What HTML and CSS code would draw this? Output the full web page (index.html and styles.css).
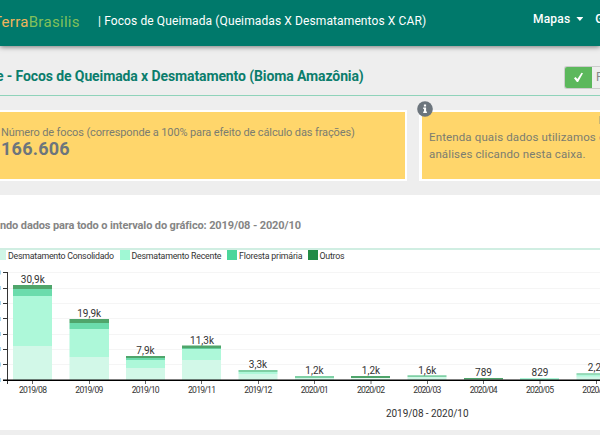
FILE: index.html
```html
<!DOCTYPE html>
<html lang="pt-BR">
<head>
<meta charset="utf-8">
<title>TerraBrasilis</title>
<link rel="stylesheet" href="styles.css">
</head>
<body>
<header class="navbar">
  <div class="brand"><span class="brand-terra">Terra</span><span class="brand-brasilis">Brasilis</span></div>
  <div class="app-name">| Focos de Queimada (Queimadas X Desmatamentos X CAR)</div>
  <nav class="menu"><span class="menu-item">Mapas</span><span class="caret"></span><span class="menu-item">G</span></nav>
</header>
<main>
  <div class="title-row">
    <h1>e - Focos de Queimada x Desmatamento (Bioma Amazônia)</h1>
    <div class="toggle">
      <span class="toggle-check"><svg width="11" height="11" viewBox="0 0 11 11"><path d="M1 6.2 2.6 5 4.4 7.1 8.5.8 10 1.3 5.1 10H3.9Z" fill="#fff"/></svg></span>
      <span class="toggle-label">P</span>
    </div>
  </div>
  <div class="cards">
    <section class="card card-count">
      <div class="count-label">Número de focos (corresponde a 100% para efeito de cálculo das frações)</div>
      <div class="count-value">166.606</div>
    </section>
    <section class="card card-info">
      <svg class="info-icon" width="16" height="16" viewBox="0 0 16 16"><circle cx="8" cy="8" r="7.8" fill="#6c757d"/><path d="M6.9 3.5h2.2v2.1H6.9zM6.2 6.6h2.9v4h.8v1.3H6.2v-1.3H7V7.9h-.8z" fill="#fff"/></svg>
      <p>Entenda quais dados utilizamos e<br>análises clicando nesta caixa.</p>
      <span class="card-edge"></span>
    </section>
  </div>
  <section class="panel">
    <h2>ndo dados para todo o intervalo do gráfico: 2019/08 - 2020/10</h2>
    <svg class="chart" width="600" height="182" viewBox="0 248 600 182">
      <path d="M0 249h600" stroke="#d0eee2" stroke-width="2"/>
      <g class="legend">
        <path d="M-4 250H6v10H-4z" fill="#d0f6e6"/>
        <path d="M120 250h10v10h-10z" fill="#a0f8d4"/>
        <path d="M227 250h10v10h-10z" fill="#4bd69c"/>
        <path d="M308 250h10v10h-10z" fill="#238b45"/>
        <text x="8" y="258.5" textLength="106">Desmatamento Consolidado</text>
        <text x="131.5" y="258.5" textLength="90">Desmatamento Recente</text>
        <text x="239" y="258.5" textLength="63.500">Floresta primária</text>
        <text x="319.500" y="258.5" textLength="25">Outros</text>
      </g>
      <path class="grid" d="M8 272.500h592M8 288.500h592M8 303.500h592M8 318.500h592M8 334.500h592M8 349.500h592M8 364.500h592"/>
      <g class="consolidado">
        <path d="M13 346h39v34H13zM69.500 357H109v23H69.500zM126 368h39v12h-39zM182 360h39v20h-39zM238.500 374h39v6h-39zM295 378h39v2h-39zM351 378.500h39v1.500h-39zM407.500 377h39v3h-39zM576.500 376H600v4h-23.500z"/>
      </g>
      <g class="recente">
        <path d="M13 296h39v50H13zM69.500 329H109v28H69.500zM126 360h39v8h-39zM182 349h39v11h-39zM238.500 372h39v2h-39zM520 378h39v2h-39zM576.500 374.500H600v2h-23.500z"/>
      </g>
      <g class="floresta">
        <path d="M13 289h39v7H13zM69.500 323H109v6H69.500zM126 358h39v2h-39zM182 348h39v1h-39z"/>
      </g>
      <g class="outros">
        <path d="M13 285h39v4H13zM69.500 319H109v4H69.500zM126 356h39v2h-39zM182 345.500h39v2.700h-39zM351 376h39v2h-39zM464 378h39v1.500h-39z"/>
      </g>
      <path fill="#7fd0a5" d="M238.500 370h39v2h-39zM295 376h39v2h-39zM407.500 375.300h39v1.700h-39zM576.500 373.200H600v1.500h-23.500z"/>
      <path class="axis" d="M7.500 272v112M3 272.500h5M3 288.500h5M3 303.500h5M3 318.500h5M3 334.500h5M3 349.500h5M3 364.500h5"/>
      <path d="M3 380.200h597" stroke="#000" stroke-width="1.400"/>
      <path class="ticks" d="M32.500 381v3M89.500 381v3M145.500 381v3M201.500 381v3M258.500 381v3M314.500 381v3M371 381v3M427.500 381v3M483.500 381v3M540 381v3M596.500 381v3"/>
      <path d="M0 270.500h1v4H0zM0 286h1v4H0zM0 301h1v4H0zM0 317h1v4H0zM0 332h1v4H0zM0 347h1v4H0zM0 362.500h1v4H0zM0 378h1v4H0z" fill="#a9d5ee"/>
      <g class="values">
        <text x="32.800" y="283">30,9k</text><text x="89.200" y="316.500">19,9k</text>
        <text x="145.500" y="354">7,9k</text><text x="202" y="343.500">11,3k</text>
        <text x="258" y="368">3,3k</text><text x="314.500" y="374">1,2k</text>
        <text x="371" y="374">1,2k</text><text x="427.300" y="373.500">1,6k</text>
        <text x="483.500" y="375.500">789</text><text x="540" y="375.500">829</text>
        <text x="597" y="371">2,2k</text>
      </g>
      <g class="months">
        <text x="19" y="392.500" textLength="28">2019/08</text><text x="75.300" y="392.500" textLength="28">2019/09</text>
        <text x="131.700" y="392.500" textLength="28">2019/10</text><text x="188" y="392.500" textLength="28">2019/11</text>
        <text x="244.300" y="392.500" textLength="28">2019/12</text><text x="300.700" y="392.500" textLength="28">2020/01</text>
        <text x="357" y="392.500" textLength="28">2020/02</text><text x="413.300" y="392.500" textLength="28">2020/03</text>
        <text x="469.700" y="392.500" textLength="28">2020/04</text><text x="526" y="392.500" textLength="28">2020/05</text>
        <text x="582.300" y="392.500" textLength="28">2020/06</text>
      </g>
      <text class="range" x="386" y="417" textLength="82.500">2019/08 - 2020/10</text>
    </svg>
  </section>
</main>
</body>
</html>
```
FILE: styles.css
```css
* { box-sizing: border-box; }
body {
  margin: 0;
  width: 600px;
  height: 435px;
  overflow: hidden;
  background: #eee;
  font-family: Roboto, "Liberation Sans", sans-serif;
  white-space: nowrap;
}
.navbar {
  position: relative;
  display: flex;
  height: 46px;
  background: #00796b;
  box-shadow: 0 1px 5px rgba(0, 0, 0, .5);
  color: #fff;
}
.brand {
  flex: none;
  width: 98px;
  margin-left: -7px;
  padding-top: 13px;
  font-size: 15px;
  line-height: 18px;
  letter-spacing: .3px;
}
.brand-terra { color: #f0b45c; }
.brand-brasilis { color: #83c05a; }
.app-name {
  flex: none;
  width: 435px;
  padding: 13px 0 0 7px;
  font-size: 12px;
  line-height: 16px;
  letter-spacing: .11px;
}
.menu {
  display: flex;
  margin-left: 7px;
  padding-top: 11px;
  font-size: 12px;
  font-weight: 500;
  line-height: 16px;
  letter-spacing: .2px;
}
.caret {
  width: 7px;
  height: 4px;
  margin: 6px 12px 0 6px;
  background: #fff;
  clip-path: polygon(0 0, 100% 0, 50% 100%);
}
.title-row {
  display: flex;
  justify-content: space-between;
  height: 50px;
  border-bottom: 1px solid #8fd3ba;
}
h1 {
  margin: 0 0 0 -4px;
  padding-top: 21px;
  color: #0b7d6c;
  font-size: 14px;
  font-weight: 700;
  line-height: 18px;
  letter-spacing: -.11px;
}
.toggle {
  display: flex;
  width: 36px;
  height: 23px;
  margin-top: 20px;
  border: 1px solid #ccc;
  border-right: 0;
  border-radius: 3px 0 0 3px;
  overflow: hidden;
}
.toggle-check {
  flex: none;
  display: grid;
  place-items: center;
  width: 27px;
  background: #5cb85c;
}
.toggle-label {
  padding-left: 4px;
  color: #888;
  font-size: 12px;
  line-height: 21px;
}
.cards {
  display: flex;
  gap: 12px;
  padding-top: 14px;
  height: 99px;
}
.card {
  height: 71px;
  background: #ffd66b;
  border: 2px solid #fff;
  color: #7b7d70;
}
.card-count {
  width: 407px;
  border-left: 0;
  padding: 12px 0 0 1px;
}
.count-label {
  font-size: 11px;
  line-height: 17px;
  letter-spacing: -.12px;
}
.count-value {
  color: #6c757d;
  font-size: 18px;
  font-weight: 700;
  line-height: 16px;
  letter-spacing: .25px;
}
.card-info {
  position: relative;
  width: 181px;
  border-left-width: 3px;
  border-right: 0;
  padding: 17px 0 0 7px;
}
.card-info p {
  margin: 0;
  font-size: 11.5px;
  line-height: 17px;
  letter-spacing: .13px;
}
.info-icon {
  position: absolute;
  left: -5px;
  top: -11px;
}
.card-edge {
  position: absolute;
  right: 0;
  top: 4px;
  width: 1px;
  height: 8px;
  background: #c9b775;
}
.panel {
  height: 235px;
  background: #fff;
}
h2 {
  height: 53px;
  margin: 0;
  padding-top: 23px;
  color: #858585;
  font-size: 11px;
  font-weight: 700;
  line-height: 16px;
  letter-spacing: -.12px;
}
.chart { display: block; }
.legend text { font-size: 8.8px; fill: #333; }
.grid { stroke: #f5f5f5; }
.consolidado { fill: #d2f8e8; }
.recente { fill: #adf8d9; }
.floresta { fill: #6bdcac; }
.outros { fill: #4fa56b; }
.axis { fill: none; stroke: #333; }
.ticks { stroke: #666; }
.values { font-size: 10px; fill: #333; text-anchor: middle; }
.months { font-size: 8.6px; fill: #333; }
.range { font-size: 10px; fill: #333; }
```
